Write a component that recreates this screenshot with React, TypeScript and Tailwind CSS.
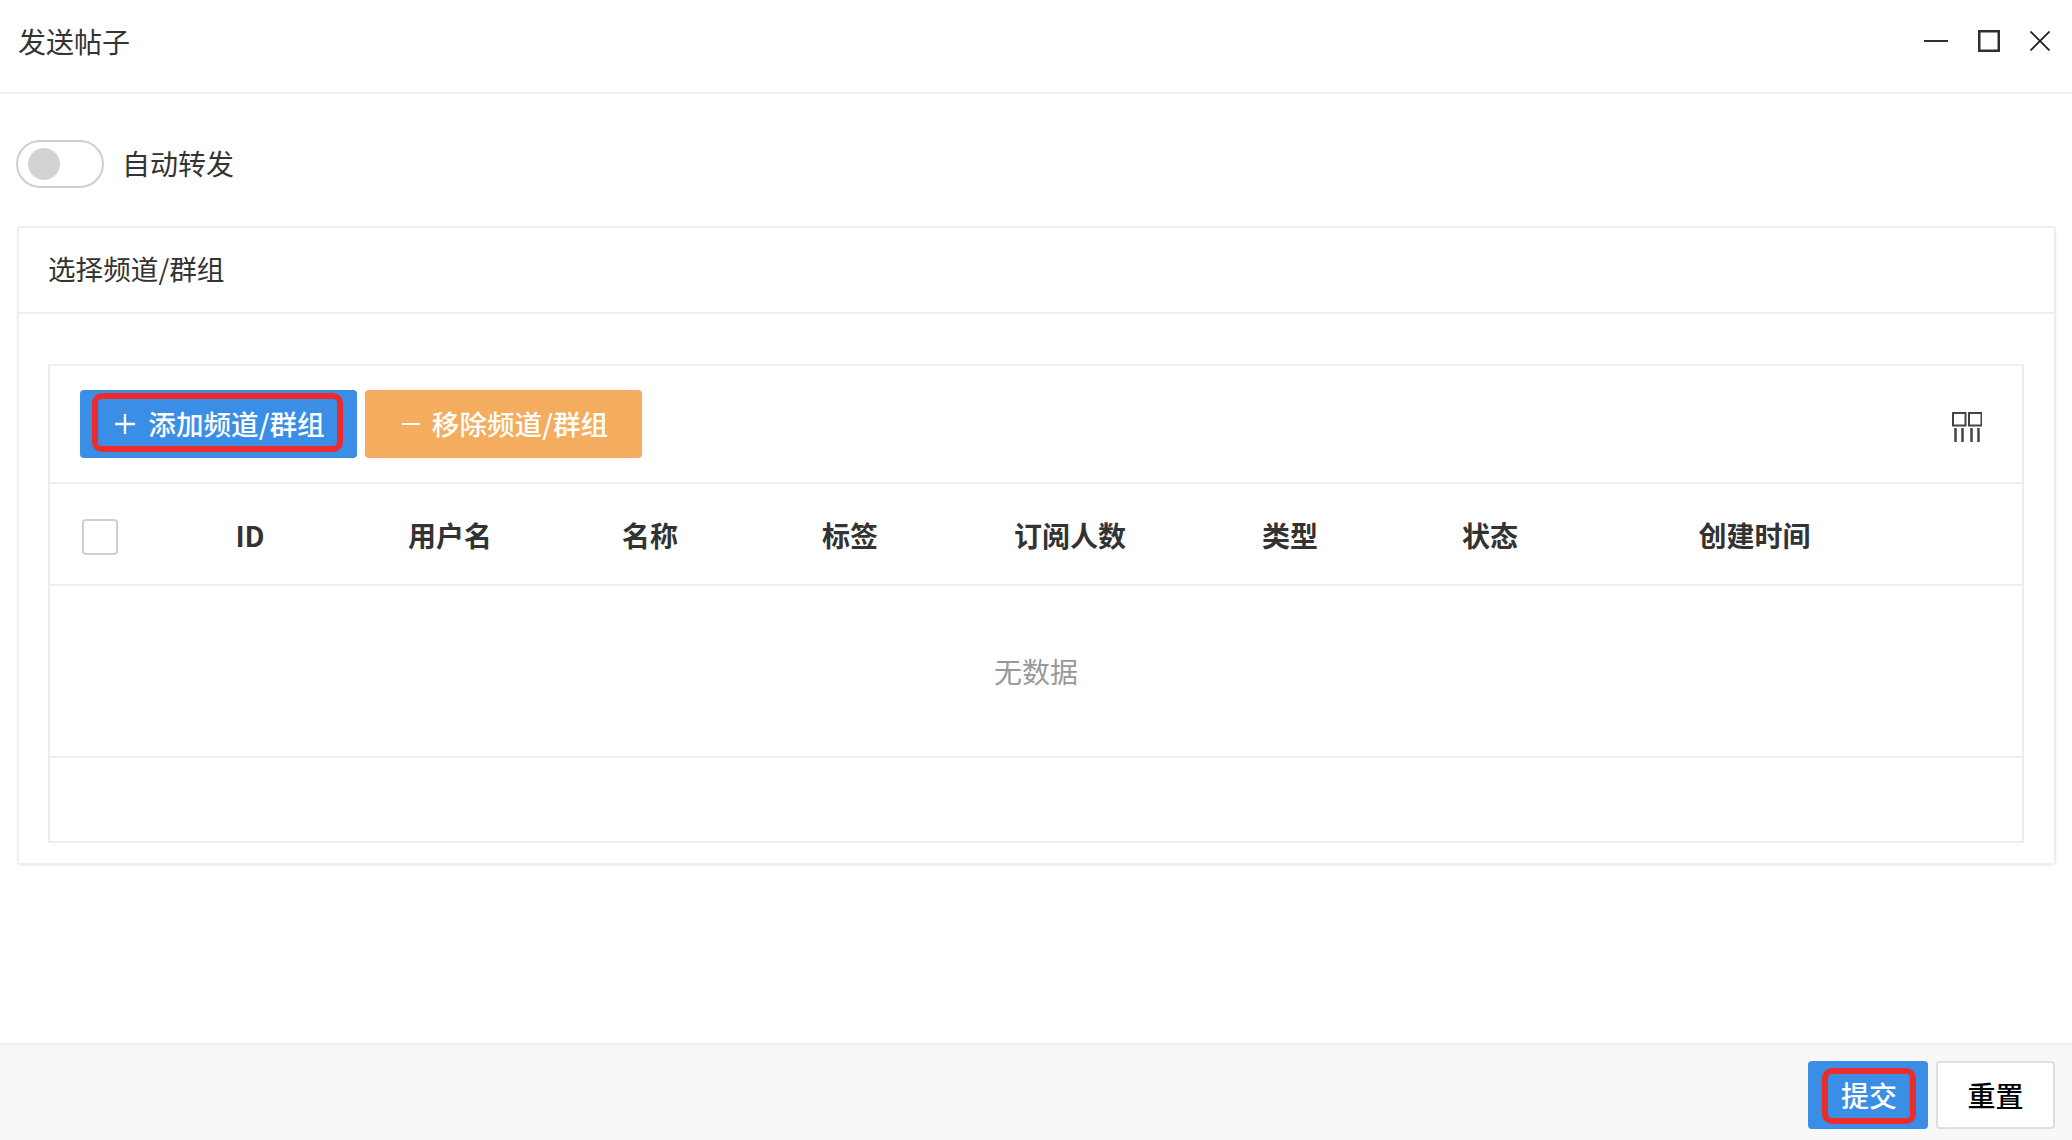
const FONT = "font-['Noto_Sans_CJK_SC','Noto_Sans',sans-serif]";

const COLUMNS = ["ID", "用户名", "名称", "标签", "订阅人数", "类型", "状态"];

function WindowButtons() {
  return (
    <div className="flex items-center">
      <svg width="24" height="24" viewBox="0 0 24 24" className="mr-[30px]">
        <path d="M0 12H24" stroke="#2f2f3a" strokeWidth="2" />
      </svg>
      <svg width="22" height="22" viewBox="0 0 22 22" className="mr-[30px]">
        <rect x="1.25" y="1.25" width="19.5" height="19.5" fill="none" stroke="#2f2f3a" strokeWidth="2.5" />
      </svg>
      <svg width="20" height="20" viewBox="0 0 20 20">
        <path d="M0.5 0.5L19.5 19.5M19.5 0.5L0.5 19.5" stroke="#1f1f24" strokeWidth="1.8" />
      </svg>
    </div>
  );
}

function ColumnsIcon() {
  return (
    <svg width="30" height="30" viewBox="0 0 30 30">
      <rect x="1" y="1" width="12.5" height="12.5" fill="none" stroke="#444" strokeWidth="2" />
      <rect x="17" y="1" width="12.5" height="12.5" fill="none" stroke="#444" strokeWidth="2" />
      <path d="M3.5 16V30M10.5 16V30M19.5 16V30M26.5 16V30" stroke="#444" strokeWidth="2.5" />
    </svg>
  );
}

export default function App() {
  return (
    <div className={`${FONT} flex h-[1140px] w-full flex-col bg-white text-[28px] leading-none text-[#333]`}>
      <header className="flex h-[94px] shrink-0 items-center justify-between border-b-2 border-[#eeeeee] pl-[18px] pr-[22px]">
        <span className="pb-[10px]">发送帖子</span>
        <div className="pb-[10px]">
          <WindowButtons />
        </div>
      </header>

      <main className="flex-1 pl-[16px] pr-[16px] pt-[46px]">
        <div className="flex items-center gap-[18px]">
          <div className="flex h-[48px] w-[88px] items-center rounded-full border-2 border-[#cfcfcf] bg-white pl-[10px]">
            <div className="h-[32px] w-[32px] rounded-full bg-[#d2d2d2]" />
          </div>
          <span className="pb-[2px]">自动转发</span>
        </div>

        <section className="ml-[1px] mt-[38px] rounded-[3px] border-2 border-[#eeeeee] shadow-[0_1px_3px_rgba(0,0,0,0.05)]">
          <div className="flex h-[86px] items-center border-b-2 border-[#eeeeee] pl-[29px]">
            <span className="pb-[2px] text-[27.6px]">选择频道/群组</span>
          </div>
          <div className="pb-[20px] pl-[29px] pr-[30px] pt-[50px]">
            <div className="border-2 border-[#eeeeee]">
              <div className="flex h-[118px] items-center justify-between border-b-2 border-[#eeeeee] pl-[30px] pr-[40px]">
                <div className="flex gap-[8px]">
                  <button className="relative flex h-[68px] w-[277px] items-center justify-center gap-[13px] rounded-[4px] bg-[#3a8ee6] pl-[3px] text-[27.6px] font-medium text-white">
                    <svg width="20" height="20" viewBox="0 0 20 20">
                      <path d="M10 0V20M0 10H20" stroke="#fff" strokeWidth="2.4" />
                    </svg>
                    <span>添加频道/群组</span>
                    <span className="absolute bottom-[6px] left-[12px] right-[14px] top-[3px] rounded-[10px] border-[6px] border-[#ee2b2b]" />
                  </button>
                  <button className="flex h-[68px] w-[277px] items-center justify-center gap-[12px] rounded-[4px] bg-[#f4ad5f] pl-[3px] text-[27.6px] font-medium text-white">
                    <svg width="18" height="20" viewBox="0 0 18 20">
                      <path d="M0 10H18" stroke="#fff" strokeWidth="2" />
                    </svg>
                    <span>移除频道/群组</span>
                  </button>
                </div>
                <div className="pt-[6px]">
                  <ColumnsIcon />
                </div>
              </div>

              <div className="grid h-[102px] grid-cols-[100px_200px_200px_200px_200px_240px_200px_200px_326px_1fr] items-center border-b-2 border-[#eeeeee] font-bold">
                <div className="pl-[32px] pt-[6px]">
                  <div className="h-[36px] w-[36px] rounded-[4px] border-2 border-[#cfcfcf] bg-white" />
                </div>
                {COLUMNS.map((c) => (
                  <div key={c} className="pt-[2px] text-center">
                    {c}
                  </div>
                ))}
                <div className="pl-[3px] pt-[2px] text-center">创建时间</div>
              </div>

              <div className="flex h-[172px] items-center justify-center border-b-2 border-[#eeeeee] text-[#999999]">
                无数据
              </div>
              <div className="h-[83px]" />
            </div>
          </div>
        </section>
      </main>

      <footer className="flex h-[97px] shrink-0 justify-end gap-[8px] border-t-2 border-[#eeeeee] bg-[#f8f8f8] pr-[17px] pt-[16px]">
        <button className="relative h-[68px] w-[120px] rounded-[4px] bg-[#3a8ee6] pl-[2px] font-medium text-white">
          提交
          <span className="absolute bottom-[5px] left-[14px] right-[12px] top-[7px] rounded-[10px] border-[6px] border-[#ee2b2b]" />
        </button>
        <button className="h-[68px] w-[119px] rounded-[4px] border-2 border-[#dcdfe6] bg-white font-medium text-black">
          重置
        </button>
      </footer>
    </div>
  );
}
